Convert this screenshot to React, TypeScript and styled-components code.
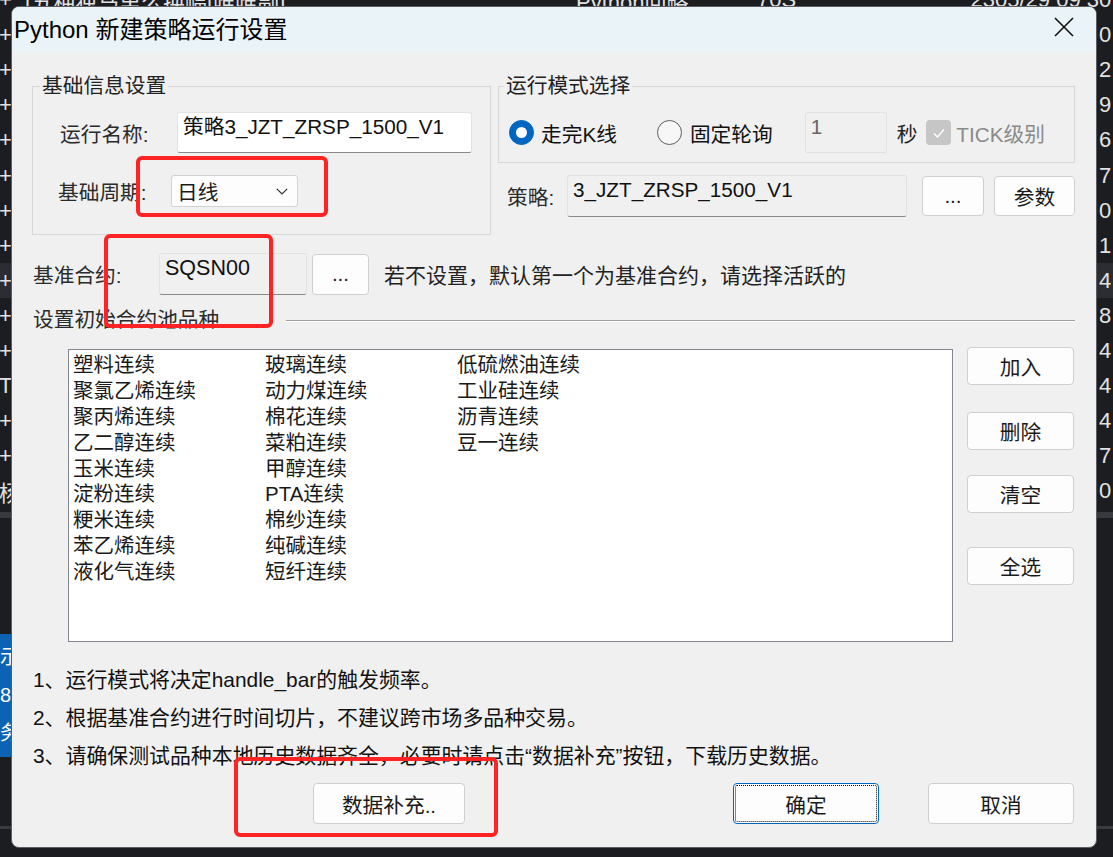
import React from "react";
import styled, { createGlobalStyle } from "styled-components";

const GlobalStyle = createGlobalStyle`
  html, body {
    margin: 0;
    padding: 0;
    background: #1c1d21;
  }
  body {
    font-family: "Liberation Sans", "Noto Sans CJK SC", sans-serif;
  }
`;

/* ---------- background application (behind the dialog) ---------- */

const Desktop = styled.div`
  position: relative;
  width: 1113px;
  height: 857px;
  overflow: hidden;
  background: #1c1d21;
  color: #e2e2e2;
`;

const BgTable = styled.div`
  display: flex;
  flex-direction: column;
  margin-top: -17.5px;
`;

const BgRow = styled.div<{ $active?: boolean }>`
  display: grid;
  grid-template-columns: 25px 551px 181px 176px 166px 1fr;
  align-items: center;
  height: 35.1px;
  font-size: 22px;
  white-space: nowrap;
  overflow: hidden;
  background: ${({ $active }) => ($active ? "#2c2d32" : "transparent")};
`;

const BgCell = styled.div<{ $right?: boolean }>`
  overflow: hidden;
  text-align: ${({ $right }) => ($right ? "right" : "left")};
`;

const BgMarker = styled.div`
  margin-left: -1px;
`;

const BgSeparator = styled.div`
  height: 6px;
  margin-top: 3px;
  background: #38393e;
`;

const BgBluePanel = styled.div`
  width: 60px;
  height: 123px;
  margin-top: 116px;
  background: #0d63b3;
  color: #fff;
  font-size: 20px;
  line-height: 38px;
  padding-top: 4px;
  box-sizing: border-box;
`;

const BgBottomLine = styled.div`
  height: 3px;
  margin-top: 69px;
  background: #3a3b40;
`;

/* ---------- dialog ---------- */

const Dialog = styled.div`
  position: absolute;
  left: 11px;
  top: 6px;
  width: 1086px;
  height: 842px;
  box-sizing: border-box;
  border: 1px solid #5b5d62;
  border-radius: 8px;
  background: #f0f0f0;
  color: #1a1a1a;
  overflow: hidden;
  display: flex;
  flex-direction: column;
  font-size: 20.7px;
`;

const TitleBar = styled.div`
  flex: none;
  box-sizing: border-box;
  height: 45px;
  display: flex;
  align-items: center;
  justify-content: space-between;
  padding: 0 22px 5px 2px;
  background: #eaf3f8;
  color: #000;
  font-size: 24px;
`;

const CloseButton = styled.div`
  width: 20px;
  height: 20px;
  display: flex;
`;

const Body = styled.div`
  display: flex;
  flex-direction: column;
  padding: 0 21px 0 20px;
`;

const TopSection = styled.div`
  display: flex;
  gap: 7px;
  margin-top: 22px;
  align-items: flex-start;
`;

const GroupBox = styled.fieldset<{ $width: number }>`
  margin: 0;
  padding: 0;
  min-width: 0;
  width: ${({ $width }) => $width}px;
  box-sizing: border-box;
  border: 1px solid #d7d7d7;
`;

const Legend = styled.legend<{ $left?: number }>`
  margin-left: ${({ $left }) => $left ?? 7}px;
  padding: 0 2px;
  line-height: 24px;
  color: #222;
`;

const GroupContent = styled.div<{ $bottom: number }>`
  display: flex;
  flex-direction: column;
  padding: 14px 0 ${({ $bottom }) => $bottom}px;
`;

const ModeColumn = styled.div`
  display: flex;
  flex-direction: column;
  width: 577px;
`;

const FieldRow = styled.div<{ $height: number; $top?: number; $left?: number }>`
  display: flex;
  align-items: center;
  height: ${({ $height }) => $height}px;
  margin-top: ${({ $top }) => $top ?? 0}px;
  padding-left: ${({ $left }) => $left ?? 0}px;
  flex: none;
`;

const Label = styled.span<{ $width?: number; $color?: string }>`
  flex: none;
  width: ${({ $width }) => ($width ? `${$width}px` : "auto")};
  color: ${({ $color }) => $color ?? "#2b2b2b"};
  white-space: nowrap;
`;

const TextBox = styled.div<{
  $width: number;
  $height: number;
  $bg?: string;
  $bottom?: string;
  $color?: string;
  $size?: number;
}>`
  flex: none;
  box-sizing: border-box;
  width: ${({ $width }) => $width}px;
  height: ${({ $height }) => $height}px;
  padding: 1px 5px 0;
  line-height: 26px;
  font-size: ${({ $size }) => ($size ? `${$size}px` : "inherit")};
  background: ${({ $bg }) => $bg ?? "#fff"};
  border: 1px solid #e2e2e2;
  border-bottom-color: ${({ $bottom }) => $bottom ?? "#8a8a8a"};
  border-radius: 3px;
  color: ${({ $color }) => $color ?? "#111"};
  white-space: nowrap;
  overflow: hidden;
`;

const Select = styled.div`
  flex: none;
  box-sizing: border-box;
  width: 127px;
  height: 32px;
  display: flex;
  align-items: center;
  justify-content: space-between;
  padding: 0 9px 0 5px;
  background: #fdfdfd;
  border: 1px solid #d2d2d2;
  border-radius: 3px;
`;

const Radio = styled.span<{ $checked?: boolean }>`
  flex: none;
  box-sizing: border-box;
  width: 25px;
  height: 25px;
  border-radius: 50%;
  display: flex;
  align-items: center;
  justify-content: center;
  background: ${({ $checked }) => ($checked ? "#0067c0" : "#f7f7f7")};
  border: 1px solid ${({ $checked }) => ($checked ? "#0067c0" : "#5e5e5e")};

  &::after {
    content: "";
    display: ${({ $checked }) => ($checked ? "block" : "none")};
    width: 11px;
    height: 11px;
    border-radius: 50%;
    background: #fff;
  }
`;

const Check = styled.span`
  flex: none;
  width: 25px;
  height: 25px;
  border-radius: 4px;
  background: #c6c6c6;
  display: flex;
  align-items: center;
  justify-content: center;
`;

const Gap = styled.span<{ $w: number }>`
  flex: none;
  width: ${({ $w }) => $w}px;
`;

const Button = styled.button<{ $width: number; $height: number; $top?: number; $left?: number; $focused?: boolean }>`
  flex: none;
  box-sizing: border-box;
  width: ${({ $width }) => $width}px;
  height: ${({ $height }) => $height}px;
  margin-top: ${({ $top }) => $top ?? 0}px;
  margin-left: ${({ $left }) => ($left === undefined ? "0" : `${$left}px`)};
  padding: 0;
  font: inherit;
  color: #1a1a1a;
  background: #fdfdfd;
  border: 1px solid ${({ $focused }) => ($focused ? "#0067c0" : "#cfcfcf")};
  border-radius: 4px;
  outline: ${({ $focused }) => ($focused ? "1px dotted #111" : "none")};
  outline-offset: -3px;
`;

const Hint = styled.span`
  color: #222;
  font-size: 21px;
  white-space: nowrap;
`;

const SectionRow = styled.div`
  display: flex;
  align-items: center;
  height: 26px;
  margin-top: 10px;
`;

const SectionTitle = styled.span`
  flex: none;
  width: 253px;
  margin-left: 1px;
  color: #2b2b2b;
`;

const SectionLine = styled.div`
  flex: 1;
  margin-top: 6px;
  border-top: 1px solid #a0a0a0;
  border-bottom: 1px solid #fff;
`;

const ListRow = styled.div`
  display: flex;
  align-items: flex-start;
  margin-top: 18px;
`;

const ListBox = styled.div`
  flex: none;
  box-sizing: border-box;
  width: 885px;
  height: 293px;
  margin-left: 36px;
  padding: 2px 0 0 4px;
  background: #fff;
  border: 1px solid #828790;
  display: grid;
  grid-template-rows: repeat(9, 25.9px);
  grid-auto-flow: column;
  grid-auto-columns: 192px;
  font-size: 20.5px;
  line-height: 25.9px;
`;

const ListItem = styled.div`
  white-space: nowrap;
  color: #1a1a1a;
`;

const SideButtons = styled.div`
  display: flex;
  flex-direction: column;
  margin: -2px 0 0 14px;
`;

const Notes = styled.div`
  display: flex;
  flex-direction: column;
  margin: 19px 0 0 1px;
  font-size: 20.9px;
`;

const Note = styled.div`
  height: 38px;
  line-height: 38px;
  white-space: nowrap;
  color: #111;
`;

const ActionRow = styled.div`
  display: flex;
  align-items: center;
  margin-top: 8px;
  padding-right: 1px;
`;

const Spacer = styled.div`
  flex: 1;
`;

const Annotation = styled.div<{ $x: number; $y: number; $w: number; $h: number }>`
  position: absolute;
  left: ${({ $x }) => $x}px;
  top: ${({ $y }) => $y}px;
  width: ${({ $w }) => $w}px;
  height: ${({ $h }) => $h}px;
  box-sizing: border-box;
  border: 4px solid #ff2323;
  border-radius: 6px;
  pointer-events: none;
`;

const markers = ["+", "+", "+", "+", "+", "+", "+", "+", "+", "+", "+", "T", "+", "+", "杨"];
const digits = ["0", "0", "2", "9", "6", "7", "0", "1", "4", "8", "4", "4", "4", "7", "0"];

const products = [
  "塑料连续", "聚氯乙烯连续", "聚丙烯连续", "乙二醇连续", "玉米连续", "淀粉连续", "粳米连续", "苯乙烯连续", "液化气连续",
  "玻璃连续", "动力煤连续", "棉花连续", "菜粕连续", "甲醇连续", "PTA连续", "棉纱连续", "纯碱连续", "短纤连续",
  "低硫燃油连续", "工业硅连续", "沥青连续", "豆一连续",
];

const Background = () => (
  <>
    <BgTable>
      {markers.map((m, i) => (
        <BgRow key={i} $active={i === 8}>
          <BgMarker>{m}</BgMarker>
          <BgCell>{i === 0 ? "[五种独马里么换幅[唯唯副]" : ""}</BgCell>
          <BgCell>{i === 0 ? "Python回略" : ""}</BgCell>
          <BgCell>{i === 0 ? "70S" : ""}</BgCell>
          <BgCell $right>{i === 0 ? "2305/29 09 3" : ""}</BgCell>
          <BgCell>{digits[i]}</BgCell>
        </BgRow>
      ))}
    </BgTable>
    <BgSeparator />
    <BgBluePanel>
      <div>示</div>
      <div>8</div>
      <div>务</div>
    </BgBluePanel>
    <BgBottomLine />
  </>
);

export default function App() {
  return (
    <>
      <GlobalStyle />
      <Desktop>
        <Background />
        <Dialog>
          <TitleBar>
            <span>Python 新建策略运行设置</span>
            <CloseButton>
              <svg width="20" height="20" viewBox="0 0 20 20">
                <path d="M1 1 L19 19 M19 1 L1 19" stroke="#111" strokeWidth="1.6" fill="none" />
              </svg>
            </CloseButton>
          </TitleBar>

          <Body>
            <TopSection>
              <GroupBox $width={459}>
                <Legend>基础信息设置</Legend>
                <GroupContent $bottom={27}>
                  <FieldRow $height={41} $left={27}>
                    <Label $width={117}>运行名称:</Label>
                    <TextBox $width={295} $height={41}>策略3_JZT_ZRSP_1500_V1</TextBox>
                  </FieldRow>
                  <FieldRow $height={32} $top={22} $left={25}>
                    <Label $width={113}>基础周期:</Label>
                    <Select>
                      <span>日线</span>
                      <svg width="12" height="7" viewBox="0 0 12 7">
                        <path d="M0.8 0.8 L6 6 L11.2 0.8" stroke="#333" strokeWidth="1.2" fill="none" />
                      </svg>
                    </Select>
                  </FieldRow>
                </GroupContent>
              </GroupBox>

              <ModeColumn>
                <GroupBox $width={577}>
                  <Legend $left={5}>运行模式选择</Legend>
                  <GroupContent $bottom={9}>
                    <FieldRow $height={41} $left={10}>
                      <Radio $checked />
                      <Gap $w={7} />
                      <Label $color="#111">走完K线</Label>
                      <Gap $w={40} />
                      <Radio />
                      <Gap $w={8} />
                      <Label $color="#111">固定轮询</Label>
                      <Gap $w={32} />
                      <TextBox $width={82} $height={41} $bg="transparent" $bottom="#e0e0e0" $color="#666">
                        1
                      </TextBox>
                      <Gap $w={10} />
                      <Label $color="#222">秒</Label>
                      <Gap $w={9} />
                      <Check>
                        <svg width="16" height="16" viewBox="0 0 16 16">
                          <path d="M3 8.5 L6.5 12 L13 4.5" stroke="#fff" strokeWidth="1.4" fill="none" />
                        </svg>
                      </Check>
                      <Gap $w={5} />
                      <Label $color="#8a8a8a">TICK级别</Label>
                    </FieldRow>
                  </GroupContent>
                </GroupBox>
                <FieldRow $height={42} $top={12} $left={9}>
                  <Label $width={60}>策略:</Label>
                  <TextBox $width={340} $height={42} $bg="#f0f0f0" $bottom="#8a8a8a">
                    3_JZT_ZRSP_1500_V1
                  </TextBox>
                  <Button $width={62} $height={40} $left={15}>...</Button>
                  <Button $width={81} $height={40} $left={10}>参数</Button>
                </FieldRow>
              </ModeColumn>
            </TopSection>

            <FieldRow $height={42} $top={18} $left={1}>
              <Label $width={126}>基准合约:</Label>
              <TextBox $width={148} $height={42} $bg="#f0f0f0" $bottom="#8a8a8a" $size={21.5}>
                SQSN00
              </TextBox>
              <Button $width={57} $height={41} $left={5}>...</Button>
              <Gap $w={15} />
              <Hint>若不设置，默认第一个为基准合约，请选择活跃的</Hint>
            </FieldRow>

            <SectionRow>
              <SectionTitle>设置初始合约池品种</SectionTitle>
              <SectionLine />
            </SectionRow>

            <ListRow>
              <ListBox>
                {products.map((p) => (
                  <ListItem key={p}>{p}</ListItem>
                ))}
              </ListBox>
              <SideButtons>
                <Button $width={107} $height={38}>加入</Button>
                <Button $width={107} $height={38} $top={27}>删除</Button>
                <Button $width={107} $height={38} $top={25}>清空</Button>
                <Button $width={107} $height={38} $top={34}>全选</Button>
              </SideButtons>
            </ListRow>

            <Notes>
              <Note>1、运行模式将决定handle_bar的触发频率。</Note>
              <Note>2、根据基准合约进行时间切片，不建议跨市场多品种交易。</Note>
              <Note>3、请确保测试品种本地历史数据齐全，必要时请点击“数据补充”按钮，下载历史数据。</Note>
            </Notes>

            <ActionRow>
              <Button $width={152} $height={41} $left={281}>数据补充..</Button>
              <Spacer />
              <Button $width={146} $height={41} $focused>确定</Button>
              <Button $width={146} $height={41} $left={49}>取消</Button>
            </ActionRow>
          </Body>

          <Annotation $x={124} $y={149} $w={192} $h={61} />
          <Annotation $x={92} $y={227} $w={169} $h={94} />
          <Annotation $x={222} $y={750} $w={264} $h={80} />
        </Dialog>
      </Desktop>
    </>
  );
}
